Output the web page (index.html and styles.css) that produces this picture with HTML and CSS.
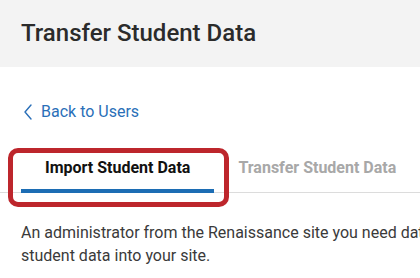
FILE: index.html
```html
<!DOCTYPE html>
<html lang="en">
<head>
<meta charset="utf-8">
<title>Transfer Student Data</title>
<link rel="stylesheet" href="styles.css">
</head>
<body>
<header class="page-header">
  <h1 class="page-title">Transfer Student Data</h1>
</header>
<main class="content">
  <a class="back-link" href="#">
    <svg class="chevron" width="8" height="16" viewBox="0 0 8 16" aria-hidden="true"><path d="M7 1 L1 8 L7 15" fill="none" stroke="currentColor" stroke-width="1.4" stroke-linecap="round" stroke-linejoin="round"/></svg>
    <span>Back to Users</span>
  </a>
  <div class="tabs-wrap">
    <nav class="tabs">
      <a class="tab active" href="#">Import Student Data</a>
      <a class="tab" href="#">Transfer Student Data</a>
    </nav>
    <div class="highlight"></div>
  </div>
  <p class="intro">An administrator from the Renaissance site you need data from must first transfer<br>student data into your site.</p>
</main>
</body>
</html>
```
FILE: styles.css
```css
* { box-sizing: border-box; }
html, body { margin: 0; padding: 0; }
body {
  font-family: Roboto, "Noto Sans", Arial, sans-serif;
  background: #ffffff;
  color: #333333;
  width: 420px;
  height: 278px;
  overflow: hidden;
}
.page-header {
  background: #f3f3f3;
  height: 67px;
  padding: 0 21px;
  display: flex;
  align-items: center;
}
.page-title {
  margin: 0;
  font-size: 24px;
  font-weight: 500;
  color: #2b2b2b;
  line-height: 28px;
  padding-bottom: 1px;
}
.content {
  padding: 35px 0 0 21px;
}
.back-link {
  display: inline-flex;
  align-items: center;
  gap: 10px;
  color: #2a6fb8;
  text-decoration: none;
  font-size: 16px;
  line-height: 20px;
  margin-left: 3px;
}
.back-link span { margin-left: -1px; }
.chevron { display: block; }
.tabs-wrap {
  position: relative;
  margin-top: 28px;
  margin-left: -21px;
  padding-left: 21px;
}
.tabs {
  display: flex;
  border-bottom: 1px solid #dcdcdc;
  width: 420px;
  margin-left: -21px;
  padding-left: 21px;
}
.tab {
  display: block;
  padding: 6px 24px 11px;
  font-size: 16px;
  font-weight: 700;
  line-height: 20px;
  color: #a8a8a8;
  text-decoration: none;
  border-bottom: 4px solid transparent;
  margin-bottom: -1px;
  white-space: nowrap;
}
.tab.active {
  color: #111111;
  border-bottom-color: #1c6db4;
}
.highlight {
  position: absolute;
  left: 8px;
  top: -4px;
  width: 221px;
  height: 59px;
  border: 5px solid #bd262c;
  border-radius: 10px;
  pointer-events: none;
}
.intro {
  margin: 28px 0 0;
  font-size: 16px;
  line-height: 23px;
  color: #3a3a3a;
  white-space: nowrap;
}
```
